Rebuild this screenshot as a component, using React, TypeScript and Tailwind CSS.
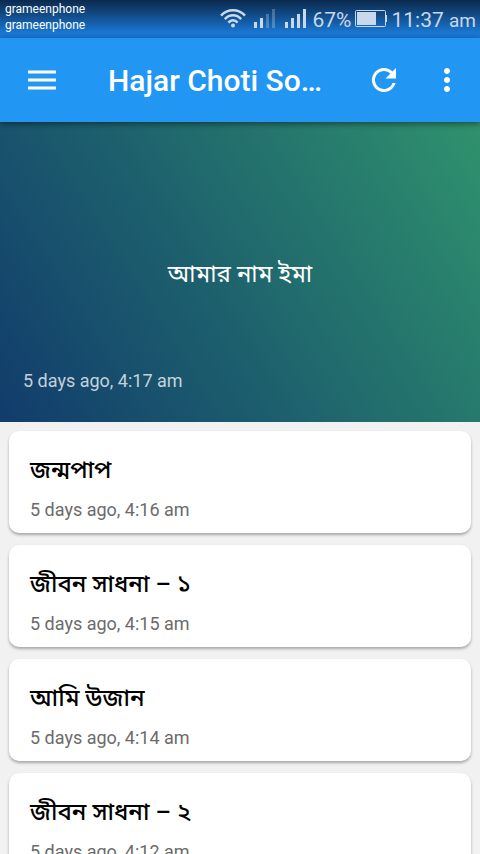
import React from 'react';

type Post = {
  title: string;
  date: string;
};

const FEATURED: Post = { title: 'আমার নাম ইমা', date: '5 days ago, 4:17 am' };

const POSTS: Post[] = [
  { title: 'জন্মপাপ', date: '5 days ago, 4:16 am' },
  { title: 'জীবন সাধনা – ১', date: '5 days ago, 4:15 am' },
  { title: 'আমি উজান', date: '5 days ago, 4:14 am' },
  { title: 'জীবন সাধনা – ২', date: '5 days ago, 4:12 am' },
];

const WifiIcon = () => (
  <svg className="h-5 w-[26px]" viewBox="0 0 26 20" fill="none" stroke="currentColor" strokeWidth="2.5">
    <path d="M1 7.6C7.5 0.6 18.5 0.6 25 7.6" />
    <path d="M4.8 11.2C9.5 6 16.5 6 21.2 11.2" />
    <path d="M8.4 14.6C11 11.4 15 11.4 17.6 14.6" />
    <circle cx="13" cy="17.6" r="2" fill="currentColor" stroke="none" />
  </svg>
);

const SignalIcon = ({ level }: { level: number }) => (
  <svg className="h-5 w-[22px]" viewBox="0 0 22 20" fill="currentColor">
    <rect x="0" y="14" width="3" height="6" />
    <rect x="6" y="10" width="3" height="10" />
    <rect x="12" y="6" width="3" height="14" opacity={level > 2 ? 1 : 0.3} />
    <rect x="18" y="1" width="3" height="19" opacity={level > 3 ? 1 : 0.3} />
  </svg>
);

const BatteryIcon = () => (
  <svg className="h-5 w-8" viewBox="0 0 32 20" fill="none" stroke="currentColor">
    <rect x="0.5" y="2.5" width="30" height="16" rx="1" />
    <rect x="2" y="4" width="19" height="13" fill="currentColor" stroke="none" />
    <path d="M31.5 7v7" />
  </svg>
);

function StatusBar() {
  return (
    <div className="flex h-[38px] shrink-0 items-start justify-between bg-linear-to-b from-[#0a2a4d] to-[#1976d2] to-85% pl-[5px] pr-1">
      <div className="pt-px text-xs leading-4 text-white">
        <p>grameenphone</p>
        <p>grameenphone</p>
      </div>
      <div className="flex items-start pt-2 text-[#c9d8ea]">
        <WifiIcon />
        <div className="ml-2 flex gap-[9px]">
          <SignalIcon level={2} />
          <SignalIcon level={4} />
        </div>
        <span className="ml-[5px] text-[21px] leading-6">67%</span>
        <div className="ml-1">
          <BatteryIcon />
        </div>
        <span className="ml-1 text-[21px] leading-6">
          11:37 <span className="text-[19px]">am</span>
        </span>
      </div>
    </div>
  );
}

function AppBar() {
  return (
    <header className="z-10 flex h-[84px] shrink-0 items-center bg-[#2196f3] pl-7 pr-[15px] text-white shadow-[0_2px_6px_rgba(0,0,0,0.45)]">
      <button type="button" aria-label="Menu">
        <svg className="h-5 w-7" viewBox="0 0 28 20" fill="currentColor">
          <path d="M0 0h28v4H0zM0 8h28v4H0zM0 16h28v4H0z" opacity="0.5" />
          <path d="M0 1h28v2H0zM0 9h28v2H0zM0 17h28v2H0z" />
        </svg>
      </button>
      <h1 className="ml-[52px] flex-1 whitespace-nowrap pt-0.5 text-[30px] font-medium leading-9">Hajar Choti So…</h1>
      <button type="button" aria-label="Refresh">
        <svg className="size-9" viewBox="0 0 24 24" fill="currentColor">
          <path d="M17.65 6.35C16.2 4.9 14.21 4 12 4c-4.42 0-7.99 3.58-7.99 8s3.57 8 7.99 8c3.73 0 6.84-2.55 7.73-6h-2.08c-.82 2.33-3.04 4-5.65 4-3.31 0-6-2.69-6-6s2.69-6 6-6c1.66 0 3.14.69 4.22 1.78L13 11h7V4l-2.35 2.35z" />
        </svg>
      </button>
      <button type="button" aria-label="More options" className="ml-[27px]">
        <svg className="size-9" viewBox="0 0 24 24" fill="currentColor">
          <path d="M12 8c1.1 0 2-.9 2-2s-.9-2-2-2-2 .9-2 2 .9 2 2 2zm0 2c-1.1 0-2 .9-2 2s.9 2 2 2 2-.9 2-2-.9-2-2-2zm0 6c-1.1 0-2 .9-2 2s.9 2 2 2 2-.9 2-2-.9-2-2-2z" />
        </svg>
      </button>
    </header>
  );
}

function FeaturedPost({ post }: { post: Post }) {
  return (
    <section className="flex h-[300px] shrink-0 flex-col bg-[linear-gradient(58deg,#113c6c,#1c5d6d_40%,#2f926d)] px-[23px] pb-[29px]">
      <h2 className="flex flex-1 items-end justify-center pb-[79px] text-2xl text-white">{post.title}</h2>
      <p className="text-lg leading-6 text-white/75">{post.date}</p>
    </section>
  );
}

function PostCard({ post }: { post: Post }) {
  return (
    <li className="h-[102px] shrink-0 rounded-[10px] bg-white px-[21px] pt-[23px] shadow-[0_2px_3px_rgba(0,0,0,0.3)]">
      <h3 className="text-2xl font-medium text-black">{post.title}</h3>
      <p className="mt-3 text-lg leading-6 text-[#6b6b6b]">{post.date}</p>
    </li>
  );
}

export default function App() {
  return (
    <div className="flex h-screen flex-col overflow-hidden bg-[#f1f1f1] font-[Roboto,'Noto_Sans_Bengali','Noto_Sans',sans-serif]">
      <StatusBar />
      <AppBar />
      <main>
        <FeaturedPost post={FEATURED} />
        <ul className="flex flex-col gap-3 p-[9px]">
          {POSTS.map((post) => (
            <PostCard key={post.title} post={post} />
          ))}
        </ul>
      </main>
    </div>
  );
}
